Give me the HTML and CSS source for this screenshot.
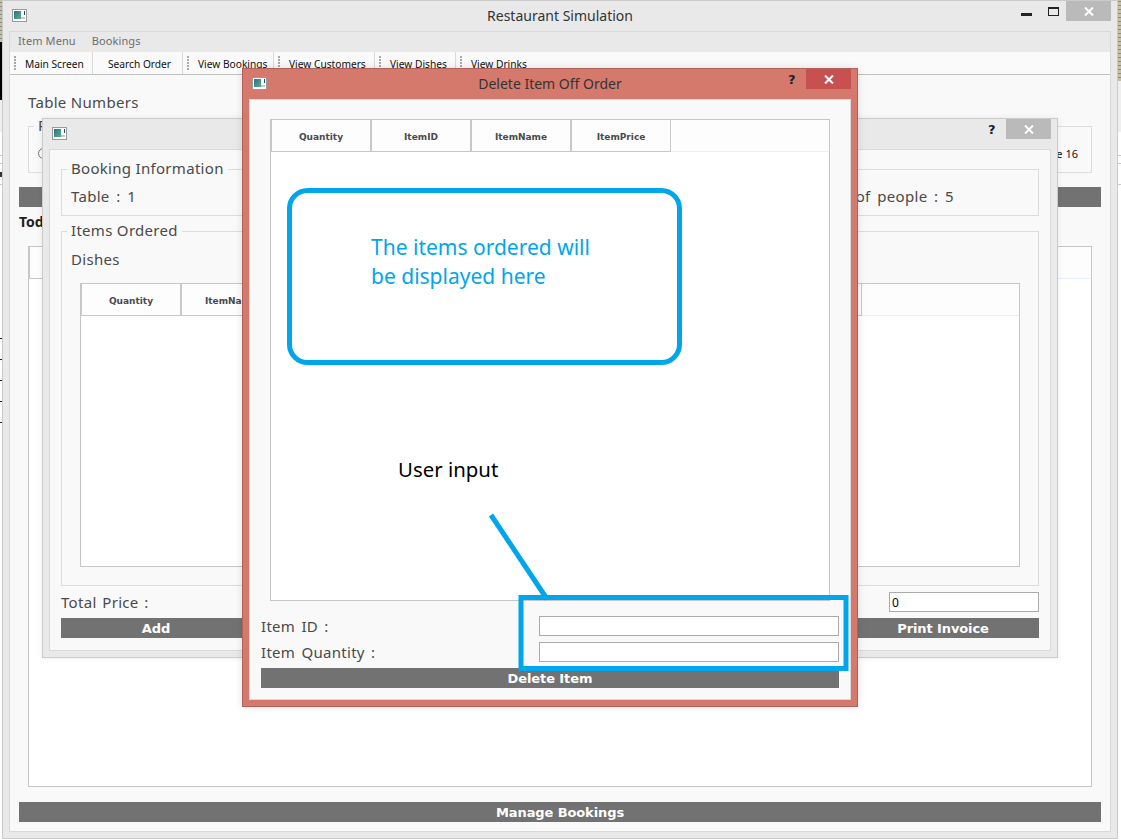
FILE: index.html
```html
<!DOCTYPE html>
<html lang="en">
<head>
    <meta charset="UTF-8">
    <meta name="viewport" content="width=device-width, initial-scale=1.0">
    <title>Restaurant Simulation</title>
    <link rel="stylesheet" href="styles.css">
</head>
<body>
    <svg class="sprites" width="0" height="0">
        <defs>
            <linearGradient id="iconFill" x1="0" y1="0" x2="1" y2="1">
                <stop offset="0" stop-color="#2c6f8c"/>
                <stop offset="1" stop-color="#5fae86"/>
            </linearGradient>
            <symbol id="appIcon" viewBox="0 0 15 13">
                <rect x="0.5" y="0.5" width="14" height="12" fill="#fff" stroke="#9a9a9a"/>
                <rect x="2" y="2" width="7" height="8" fill="url(#iconFill)"/>
                <rect x="9" y="8" width="4" height="2" fill="#c9c9c9"/>
                <rect x="12" y="2" width="1" height="4" fill="#244a66"/>
            </symbol>
            <symbol id="closeIcon" viewBox="0 0 10 9">
                <path d="M1 0.5 L9 8.5 M9 0.5 L1 8.5" stroke="#fff" stroke-width="2" fill="none"/>
            </symbol>
        </defs>
    </svg>

    <!-- bits of the desktop showing round the main window -->
    <div class="desk desk-left">
        <div class="desk-tex"></div>
        <div class="desk-black"></div>
        <div class="desk-pale"></div>
        <div class="desk-line line-a"></div>
        <div class="desk-line line-b"></div>
        <div class="desk-line line-c"></div>
        <div class="desk-ticks"></div>
        <span class="desk-frag"></span>
    </div>
    <div class="desk desk-right">
        <div class="desk-tex desk-tex-tall"></div>
        <div class="desk-pale desk-pale-tall"></div>
        <div class="desk-line line-a"></div>
        <div class="desk-line line-b"></div>
        <div class="desk-line line-c"></div>
    </div>

    <!-- main window -->
    <div class="window main-window">
        <div class="titlebar">
            <div class="title-left"><svg class="app-icon"><use href="#appIcon"/></svg></div>
            <div class="title-text">Restaurant Simulation</div>
            <div class="title-btns">
                <span class="ctl"><span class="ctl-min"></span></span>
                <span class="ctl"><span class="ctl-max"></span></span>
                <span class="ctl-close"><svg class="close-icon"><use href="#closeIcon"/></svg></span>
            </div>
        </div>
        <div class="client">
            <div class="menubar">
                <span>Item Menu</span>
                <span>Bookings</span>
            </div>
            <div class="toolbar">
                <div class="tool tool-main"><span class="grip"></span><span>Main Screen</span></div>
                <div class="tool tool-search"><span>Search Order</span></div>
                <div class="tool tool-bookings"><span class="grip"></span><span>View Bookings</span></div>
                <div class="tool tool-customers"><span class="grip"></span><span>View Customers</span></div>
                <div class="tool tool-dishes"><span class="grip"></span><span>View Dishes</span></div>
                <div class="tool tool-drinks"><span class="grip"></span><span>View Drinks</span></div>
            </div>
            <div class="main-body">
                <div class="section-label">Table Numbers</div>
                <fieldset class="group tables-group">
                    <legend>Reserved</legend>
                    <div class="tables-row">
                        <span class="radio"></span>
                        <span class="table-name">Table 16</span>
                    </div>
                </fieldset>
                <div class="bar">View Table</div>
                <div class="today">Today</div>
                <div class="grid-table main-table">
                    <div class="grid-head"><span class="head-cell"></span></div>
                </div>
                <div class="bar">Manage Bookings</div>
            </div>
        </div>
    </div>

    <!-- booking window -->
    <div class="window booking-window">
        <div class="titlebar">
            <div class="title-left"><svg class="app-icon"><use href="#appIcon"/></svg></div>
            <div class="title-text"></div>
            <div class="title-btns">
                <span class="ctl-help">?</span>
                <span class="ctl-close"><svg class="close-icon"><use href="#closeIcon"/></svg></span>
            </div>
        </div>
        <div class="client booking-client">
            <fieldset class="group info-group">
                <legend>Booking Information</legend>
                <div class="info-row">
                    <span>Table : 1</span>
                    <span>Number of people : 5</span>
                </div>
            </fieldset>
            <fieldset class="group items-group">
                <legend>Items Ordered</legend>
                <div class="dishes-label">Dishes</div>
                <div class="grid-table dishes-table">
                    <div class="grid-head">
                        <span class="head-cell">Quantity</span>
                        <span class="head-cell">ItemName</span>
                        <span class="head-cell head-wide"></span>
                    </div>
                </div>
            </fieldset>
            <div class="total-row">
                <span>Total Price :</span>
                <input class="text-input total-input" type="text" value="0">
            </div>
            <div class="booking-btns">
                <div class="bar bar-add">Add</div>
                <div class="bar bar-print">Print Invoice</div>
            </div>
        </div>
    </div>

    <!-- delete dialog, active window -->
    <div class="window dialog-window">
        <div class="titlebar">
            <div class="title-left"><svg class="app-icon"><use href="#appIcon"/></svg></div>
            <div class="title-text">Delete Item Off Order</div>
            <div class="title-btns">
                <span class="ctl-help">?</span>
                <span class="ctl-close"><svg class="close-icon"><use href="#closeIcon"/></svg></span>
            </div>
        </div>
        <div class="client dialog-client">
            <div class="grid-table dialog-table">
                <div class="grid-head">
                    <span class="head-cell">Quantity</span>
                    <span class="head-cell">ItemID</span>
                    <span class="head-cell">ItemName</span>
                    <span class="head-cell">ItemPrice</span>
                </div>
            </div>
            <div class="form-row">
                <label for="itemId">Item ID :</label>
                <input class="text-input" id="itemId" type="text">
            </div>
            <div class="form-row">
                <label for="itemQty">Item Quantity :</label>
                <input class="text-input" id="itemQty" type="text">
            </div>
            <div class="bar">Delete Item</div>
        </div>
    </div>

    <!-- annotations painted over the screenshot -->
    <svg class="marks" width="1121" height="840" viewBox="0 0 1121 840">
        <rect class="mark" x="289.5" y="190.5" width="390" height="172" rx="18"/>
        <rect class="mark" x="521" y="597.5" width="325" height="71"/>
        <path class="mark" d="M491 515 L547 599"/>
    </svg>
    <div class="note note-blue">The items ordered will<br>be displayed here</div>
    <div class="note note-black">User input</div>
</body>
</html>
```

FILE: styles.css
```css
* {
    box-sizing: border-box;
}
body {
    margin: 0;
    width: 1121px;
    height: 840px;
    position: relative;
    overflow: hidden;
    background: #fff;
    font-family: "Noto Sans", sans-serif;
    font-size: 15px;
    letter-spacing: 0.3px;
    color: #4a4a4a;
}
.sprites {
    position: absolute;
}

/* desktop */
.desk {
    position: absolute;
    top: 0;
    width: 3px;
    height: 430px;
    overflow: hidden;
}
.desk-left {
    left: 0;
    width: 2px;
}
.desk-right {
    right: 0;
}
.desk-tex {
    height: 42px;
    background: repeating-linear-gradient(0deg, #c4c0a8 0, #c4c0a8 3px, #8f8c78 3px, #8f8c78 4px);
}
.desk-tex-tall {
    height: 81px;
}
.desk-black {
    height: 58px;
    background: #000;
}
.desk-pale {
    height: 32px;
    background: #efefef;
}
.desk-pale-tall {
    height: 51px;
}
.desk-line {
    height: 1px;
    background: #c8c8c8;
}
.line-a {
    margin-top: 23px;
}
.line-b {
    margin-top: 7px;
}
.line-c {
    margin-top: 20px;
}
.desk-ticks {
    height: 90px;
    margin-top: 153px;
    background: repeating-linear-gradient(180deg, #222 0, #222 1px, #fffde0 1px, #fffde0 3px, #fff 3px, #fff 21px);
}
.desk-frag {
    position: absolute;
    left: 0;
    top: 172px;
    width: 2px;
    height: 5px;
    background: #333;
}

/* windows */
.window {
    position: absolute;
    display: flex;
    flex-direction: column;
    padding: 0 6px 6px;
    background: #e9e9e9;
    border: 1px solid #cbcbcb;
}
.main-window {
    left: 2px;
    top: 0;
    width: 1116px;
    height: 839px;
}
.booking-window {
    left: 42px;
    top: 118px;
    width: 1016px;
    height: 540px;
    box-shadow: 0 0 6px rgba(0, 0, 0, 0.08);
}
.dialog-window {
    left: 242px;
    top: 68px;
    width: 616px;
    height: 639px;
    background: #d5796d;
    border-color: #b0625a;
    box-shadow: 0 0 8px rgba(0, 0, 0, 0.12);
}
.titlebar {
    height: 30px;
    flex: none;
    display: grid;
    grid-template-columns: 1fr auto 1fr;
    color: #333;
    letter-spacing: 0;
}
.title-left {
    padding: 8px 0 0 3px;
}
.app-icon {
    display: block;
    width: 15px;
    height: 13px;
}
.title-text {
    font-size: 14px;
    line-height: 30px;
}
.title-btns {
    display: flex;
    justify-content: flex-end;
    align-items: flex-start;
}
.ctl {
    width: 26px;
    height: 20px;
    display: flex;
    align-items: center;
    justify-content: center;
}
.ctl-min {
    width: 11px;
    height: 3px;
    margin: 6px 1px 0 0;
    background: #222;
}
.ctl-max {
    width: 11px;
    height: 9px;
    border: 1px solid #222;
    border-top-width: 2px;
}
.ctl-help {
    width: 18px;
    height: 20px;
    font-family: "DejaVu Sans", sans-serif;
    font-weight: bold;
    font-size: 13px;
    line-height: 21px;
    color: #222;
}
.ctl-close {
    width: 45px;
    height: 20px;
    display: flex;
    align-items: center;
    justify-content: center;
    background: #bababa;
}
.dialog-window .ctl-close {
    background: #c75050;
}
.close-icon {
    display: block;
    width: 10px;
    height: 9px;
}

/* client area */
.client {
    flex: 1;
    background: #f9f9f9;
    border: 1px solid #d9d9d9;
    min-height: 0;
}
.menubar {
    height: 20px;
    display: flex;
    gap: 16px;
    padding-left: 8px;
    background: #e9e9e9;
    font-size: 11px;
    line-height: 18px;
    letter-spacing: 0.1px;
    color: #6d6d6d;
}
.toolbar {
    height: 23px;
    display: flex;
    background: #fafafa;
    border-bottom: 1px solid #c0c0c0;
    font-size: 10.2px;
    line-height: 24px;
    letter-spacing: 0;
    color: #111;
}
.tool {
    display: flex;
    border-right: 1px solid #d9d9d9;
    height: 22px;
}
.grip {
    width: 2px;
    height: 14px;
    margin: 4px 9px 0 4px;
    background: repeating-linear-gradient(180deg, #aaa 0, #aaa 2px, transparent 2px, transparent 3px);
}
.tool-main {
    width: 83px;
}
.tool-search {
    width: 90px;
    padding-left: 15px;
}
.tool-bookings {
    width: 91px;
}
.tool-customers {
    width: 101px;
}
.tool-dishes {
    width: 81px;
}
.tool-drinks {
    border-right: none;
}
.main-body {
    padding: 17px 9px 9px;
}
.section-label {
    margin-left: 9px;
    line-height: 20px;
}
.group {
    margin: 0;
    padding: 0 9px;
    min-width: 0;
    border: 1px solid #dcdcdc;
}
.group legend {
    padding: 0 4px 2px;
    margin-left: -4px;
    line-height: 20px;
}
.tables-group {
    height: 58px;
    margin: 3px 9px 14px;
}
.tables-row {
    display: flex;
    justify-content: space-between;
    align-items: center;
    height: 33px;
    color: #111;
    font-size: 11px;
    letter-spacing: 0;
}
.radio {
    width: 11px;
    height: 11px;
    border: 1px solid #777;
    border-radius: 50%;
}
.table-name {
    margin-right: 4px;
}
.bar {
    height: 20px;
    background: #727272;
    color: #fff;
    font-family: "DejaVu Sans", sans-serif;
    font-weight: bold;
    font-size: 13px;
    line-height: 21px;
    letter-spacing: -0.1px;
    text-align: center;
}
.today {
    margin: 5px 0 14px;
    line-height: 20px;
    font-weight: bold;
    font-size: 14px;
    letter-spacing: 0;
    color: #222;
}

/* tables */
.grid-table {
    background: #fff;
    border: 1px solid #c6c6c6;
}
.grid-head {
    height: 32px;
    display: flex;
    background: #fdfdfd;
    border-bottom: 1px solid #e9f0f8;
}
.head-cell {
    width: 100px;
    height: 32px;
    flex: none;
    border: 1px solid #c8c8c8;
    border-top: none;
    font-family: "DejaVu Sans", sans-serif;
    font-weight: bold;
    font-size: 9px;
    line-height: 34px;
    letter-spacing: 0;
    text-align: center;
}
.head-wide {
    width: 581px;
}
.main-table {
    height: 541px;
    margin: 0 9px 15px;
}
.dishes-table {
    height: 284px;
    margin: 14px 0 0 9px;
    width: 940px;
}
.dialog-table {
    height: 482px;
    margin: 0 9px 15px;
}

/* booking window */
.booking-client {
    padding: 8px 11px 0;
}
.info-group {
    height: 58px;
    margin-bottom: 4px;
}
.info-row {
    display: flex;
    justify-content: space-between;
    padding: 6px 75px 0 0;
    line-height: 20px;
    word-spacing: 2.5px;
}
.items-group {
    height: 366px;
}
.dishes-label {
    padding-top: 7px;
    line-height: 20px;
}
.total-row {
    display: flex;
    justify-content: space-between;
    align-items: center;
    margin-top: 6px;
    word-spacing: 1.5px;
}
.text-input {
    width: 300px;
    height: 20px;
    padding: 0 2px;
    background: #fff;
    border: 1px solid #ababab;
    border-radius: 0;
    outline: none;
    font-family: "Noto Sans", sans-serif;
    font-size: 12px;
    color: #000;
}
.total-input {
    width: 150px;
}
.booking-btns {
    display: flex;
    justify-content: space-between;
    margin-top: 6px;
}
.bar-add {
    width: 190px;
}
.bar-print {
    width: 192px;
}

/* delete dialog */
.dialog-client {
    padding: 19px 11px 0;
}
.form-row {
    display: flex;
    justify-content: space-between;
    align-items: center;
    margin-bottom: 6px;
    word-spacing: 2px;
}

/* annotations */
.marks {
    position: absolute;
    left: 0;
    top: 0;
}
.mark {
    fill: none;
    stroke: #00a6ea;
    stroke-width: 5;
}
.note {
    position: absolute;
    line-height: 29px;
    letter-spacing: 0;
}
.note-blue {
    left: 371px;
    top: 233px;
    font-size: 21px;
    color: #00a6ea;
}
.note-black {
    left: 398px;
    top: 455px;
    font-size: 20.4px;
    color: #000;
}
```
